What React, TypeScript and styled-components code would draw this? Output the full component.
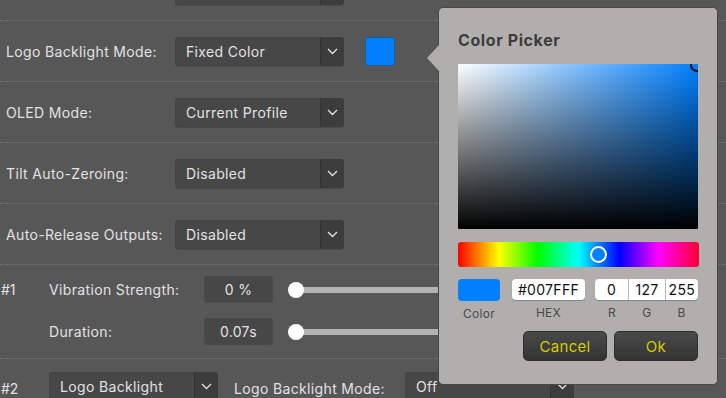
import React from "react";
import styled, { createGlobalStyle } from "styled-components";

const Global = createGlobalStyle`
  html, body { margin: 0; padding: 0; background: #575757; overflow: hidden; }
  body { font-family: Inter, "Open Sans", sans-serif; font-size: 14px; color: #e2e2e2; }
`;

const Page = styled.div`
  position: relative;
  width: 726px;
  height: 398px;
  overflow: hidden;
`;

const List = styled.div`
  margin-top: -40px;
  display: flex;
  flex-direction: column;
`;

const Row = styled.div<{ $h?: number }>`
  height: ${(p) => p.$h ?? 60}px;
  display: flex;
  align-items: center;
  border-bottom: 1px dotted #767676;
  padding-left: 6px;
`;

const Label = styled.div<{ $w?: number }>`
  width: ${(p) => p.$w ?? 169}px;
  flex: none;
  letter-spacing: 0.35px;
`;

const SelectBox = styled.div<{ $w?: number }>`
  width: ${(p) => p.$w ?? 169}px;
  height: 29px;
  flex: none;
  display: flex;
  background: #474747;
  border-radius: 4px;
  box-shadow: inset 0 0 0 1px #444, 0 1px 0 rgba(0,0,0,0.15);
  overflow: hidden;
`;

const SelectText = styled.div`
  flex: 1;
  display: flex;
  align-items: center;
  padding-left: 11px;
  letter-spacing: 0.35px;
`;

const SelectArrow = styled.div`
  width: 23px;
  flex: none;
  display: flex;
  align-items: center;
  justify-content: center;
  background: #3c3c3c;
  border-left: 1px solid #333;
`;

const Swatch = styled.div`
  width: 28px;
  height: 27px;
  margin-left: 21px;
  background: #007fff;
  border: 1px solid #1e5aa0;
  border-radius: 3px;
`;

const VibSection = styled.div`
  height: 94px;
  display: flex;
  flex-direction: column;
  gap: 15px;
  padding-top: 11px;
  box-sizing: border-box;
  border-bottom: 1px dotted #767676;
`;

const VibRow = styled.div`
  height: 27px;
  display: flex;
  align-items: center;
`;

const Num = styled.div<{ $top?: number }>`
  width: 49px;
  flex: none;
  padding-left: 1px;
  padding-top: ${(p) => p.$top ?? 0}px;
  box-sizing: border-box;
`;

const VibLabel = styled.div`
  width: 155px;
  flex: none;
  letter-spacing: 0.35px;
`;

const ValueBox = styled.div`
  width: 69px;
  height: 27px;
  flex: none;
  display: flex;
  align-items: center;
  justify-content: center;
  background: #474747;
  border-radius: 4px;
  box-shadow: inset 0 0 0 1px #4a4a4a;
  letter-spacing: 0.3px;
`;

const Slider = styled.div`
  position: relative;
  margin-left: 15px;
  width: 200px;
  height: 16px;
  display: flex;
  align-items: center;
`;

const Track = styled.div`
  width: 100%;
  height: 6px;
  margin-left: 8px;
  background: #b3b3b3;
`;

const Knob = styled.div`
  position: absolute;
  left: 0;
  top: 0;
  width: 16px;
  height: 16px;
  border-radius: 50%;
  background: #fff;
`;

const BottomRow = styled.div`
  display: flex;
  align-items: flex-start;
  padding-top: 13px;
`;

const BottomLabel = styled.div`
  width: 171px;
  padding-left: 16px;
  padding-top: 8px;
  flex: none;
  letter-spacing: 0.35px;
`;

/* Color picker popup */
const Popup = styled.div`
  position: absolute;
  left: 438px;
  top: 7px;
  width: 280px;
  height: 378px;
  box-sizing: border-box;
  background: #b1afad;
  border: 1px solid #474747;
  border-radius: 5px;
  padding: 0 19px 0 19px;
  display: flex;
  flex-direction: column;
  color: #3b3b3b;
`;

const Pointer = styled.div`
  position: absolute;
  left: -12px;
  top: 37px;
  width: 0;
  height: 0;
  border-top: 13px solid transparent;
  border-bottom: 13px solid transparent;
  border-right: 12px solid #b1afad;
  &::before {
    content: "";
    position: absolute;
    left: -1px;
    top: -14px;
    border-top: 14px solid transparent;
    border-bottom: 14px solid transparent;
    border-right: 13px solid #474747;
    z-index: -1;
  }
`;

const Title = styled.div`
  font-weight: 700;
  font-size: 16px;
  letter-spacing: 0.6px;
  margin-top: 23px;
  height: 19px;
  line-height: 19px;
  color: #3c3c3c;
`;

const SVArea = styled.div`
  position: relative;
  margin-top: 14px;
  width: 240px;
  height: 165px;
  overflow: hidden;
  border-radius: 1px;
  background:
    linear-gradient(to top, #000, rgba(0,0,0,0)),
    linear-gradient(to right, #fff, #007fff);
`;

const SVHandle = styled.div`
  position: absolute;
  right: -6px;
  top: -6px;
  width: 10px;
  height: 10px;
  border: 2px solid #111;
  border-radius: 50%;
`;

const HueBar = styled.div`
  position: relative;
  margin-top: 13px;
  width: 241px;
  height: 25px;
  border-radius: 3px;
  background: linear-gradient(to right, #f00 0%, #ff0 17%, #0f0 33%, #0ff 50%, #00f 67%, #f0f 83%, #f03 100%);
`;

const HueKnob = styled.div`
  position: absolute;
  top: 4px;
  width: 13px;
  height: 13px;
  border: 2px solid #fff;
  border-radius: 50%;
  background: #007fff;
  box-shadow: 0 0 2px rgba(0,0,0,0.4);
`;

const InputsRow = styled.div`
  display: flex;
  margin-top: 12px;
  gap: 12px;
`;

const Field = styled.div<{ $w: number }>`
  width: ${(p) => p.$w}px;
  display: flex;
  flex-direction: column;
  align-items: center;
  gap: 5px;
`;

const ColorChip = styled.div`
  width: 42px;
  height: 22px;
  border-radius: 4px;
  background: #007fff;
`;

const Input = styled.div`
  width: 100%;
  height: 21px;
  box-sizing: border-box;
  background: #fff;
  border-radius: 4px;
  box-shadow: 0 1px 1px rgba(0,0,0,0.25);
  color: #111;
  font-size: 14px;
  letter-spacing: 0.3px;
  display: flex;
  align-items: center;
  justify-content: center;
`;

const RGBGroup = styled.div`
  width: 103px;
  height: 21px;
  display: flex;
  background: #fff;
  border-radius: 4px;
  box-shadow: 0 1px 1px rgba(0,0,0,0.25);
  overflow: hidden;
`;

const RGBCell = styled.div<{ $w: number }>`
  width: ${(p) => p.$w}px;
  display: flex;
  align-items: center;
  justify-content: center;
  color: #111;
  font-size: 14px;
  letter-spacing: 0.3px;
  & + & { border-left: 1px solid #b8b8b8; }
`;

const SmallLabels = styled.div`
  display: flex;
`;

const SmallLabel = styled.div<{ $w: number }>`
  width: ${(p) => p.$w}px;
  text-align: center;
  font-size: 12px;
  letter-spacing: 0.3px;
  color: #4a4a4a;
`;

const RGBWrap = styled.div`
  margin-left: -2px;
  display: flex;
  flex-direction: column;
  gap: 5px;
`;

const Buttons = styled.div`
  display: flex;
  justify-content: flex-end;
  gap: 7px;
  margin-top: 10px;
`;

const Button = styled.div`
  width: 84px;
  height: 30px;
  box-sizing: border-box;
  display: flex;
  align-items: center;
  justify-content: center;
  border-radius: 5px;
  background: linear-gradient(to bottom, #4a4a4a, #333);
  border: 1px solid #2f2f2f;
  color: #d6cc00;
  font-size: 15px;
  letter-spacing: 0.3px;
`;

const Chevron = () => (
  <svg width="11" height="7" viewBox="0 0 11 7">
    <path d="M1 1 L5.5 5.5 L10 1" fill="none" stroke="#e0e0e0" strokeWidth="1.4" />
  </svg>
);

const Select = ({ value, w }: { value: string; w?: number }) => (
  <SelectBox $w={w}>
    <SelectText>{value}</SelectText>
    <SelectArrow>
      <Chevron />
    </SelectArrow>
  </SelectBox>
);

export default function App() {
  return (
    <Page>
      <Global />
      <List>
        <Row>
          <Label />
          <Select value="" />
        </Row>
        <Row>
          <Label>Logo Backlight Mode:</Label>
          <Select value="Fixed Color" />
          <Swatch />
        </Row>
        <Row>
          <Label>OLED Mode:</Label>
          <Select value="Current Profile" />
        </Row>
        <Row>
          <Label>Tilt Auto-Zeroing:</Label>
          <Select value="Disabled" />
        </Row>
        <Row>
          <Label>Auto-Release Outputs:</Label>
          <Select value="Disabled" />
        </Row>
        <VibSection>
          <VibRow>
            <Num>#1</Num>
            <VibLabel>Vibration Strength:</VibLabel>
            <ValueBox>0 %</ValueBox>
            <Slider>
              <Track />
              <Knob />
            </Slider>
          </VibRow>
          <VibRow>
            <Num />
            <VibLabel>Duration:</VibLabel>
            <ValueBox>0.07s</ValueBox>
            <Slider>
              <Track />
              <Knob />
            </Slider>
          </VibRow>
        </VibSection>
        <BottomRow>
          <Num $top={8}>#2</Num>
          <Select value="Logo Backlight" />
          <BottomLabel>Logo Backlight Mode:</BottomLabel>
          <Select value="Off" w={169} />
        </BottomRow>
      </List>

      <Popup>
        <Pointer />
        <Title>Color Picker</Title>
        <SVArea>
          <SVHandle />
        </SVArea>
        <HueBar>
          <HueKnob style={{ left: `${(210 / 360) * 241 - 8.5}px` }} />
        </HueBar>
        <InputsRow>
          <Field $w={42}>
            <ColorChip />
            <SmallLabel $w={42}>Color</SmallLabel>
          </Field>
          <Field $w={73}>
            <Input>#007FFF</Input>
            <SmallLabel $w={73}>HEX</SmallLabel>
          </Field>
          <RGBWrap>
            <RGBGroup>
              <RGBCell $w={34}>0</RGBCell>
              <RGBCell $w={36}>127</RGBCell>
              <RGBCell $w={33}>255</RGBCell>
            </RGBGroup>
            <SmallLabels>
              <SmallLabel $w={34}>R</SmallLabel>
              <SmallLabel $w={36}>G</SmallLabel>
              <SmallLabel $w={33}>B</SmallLabel>
            </SmallLabels>
          </RGBWrap>
        </InputsRow>
        <Buttons>
          <Button>Cancel</Button>
          <Button>Ok</Button>
        </Buttons>
      </Popup>
    </Page>
  );
}
